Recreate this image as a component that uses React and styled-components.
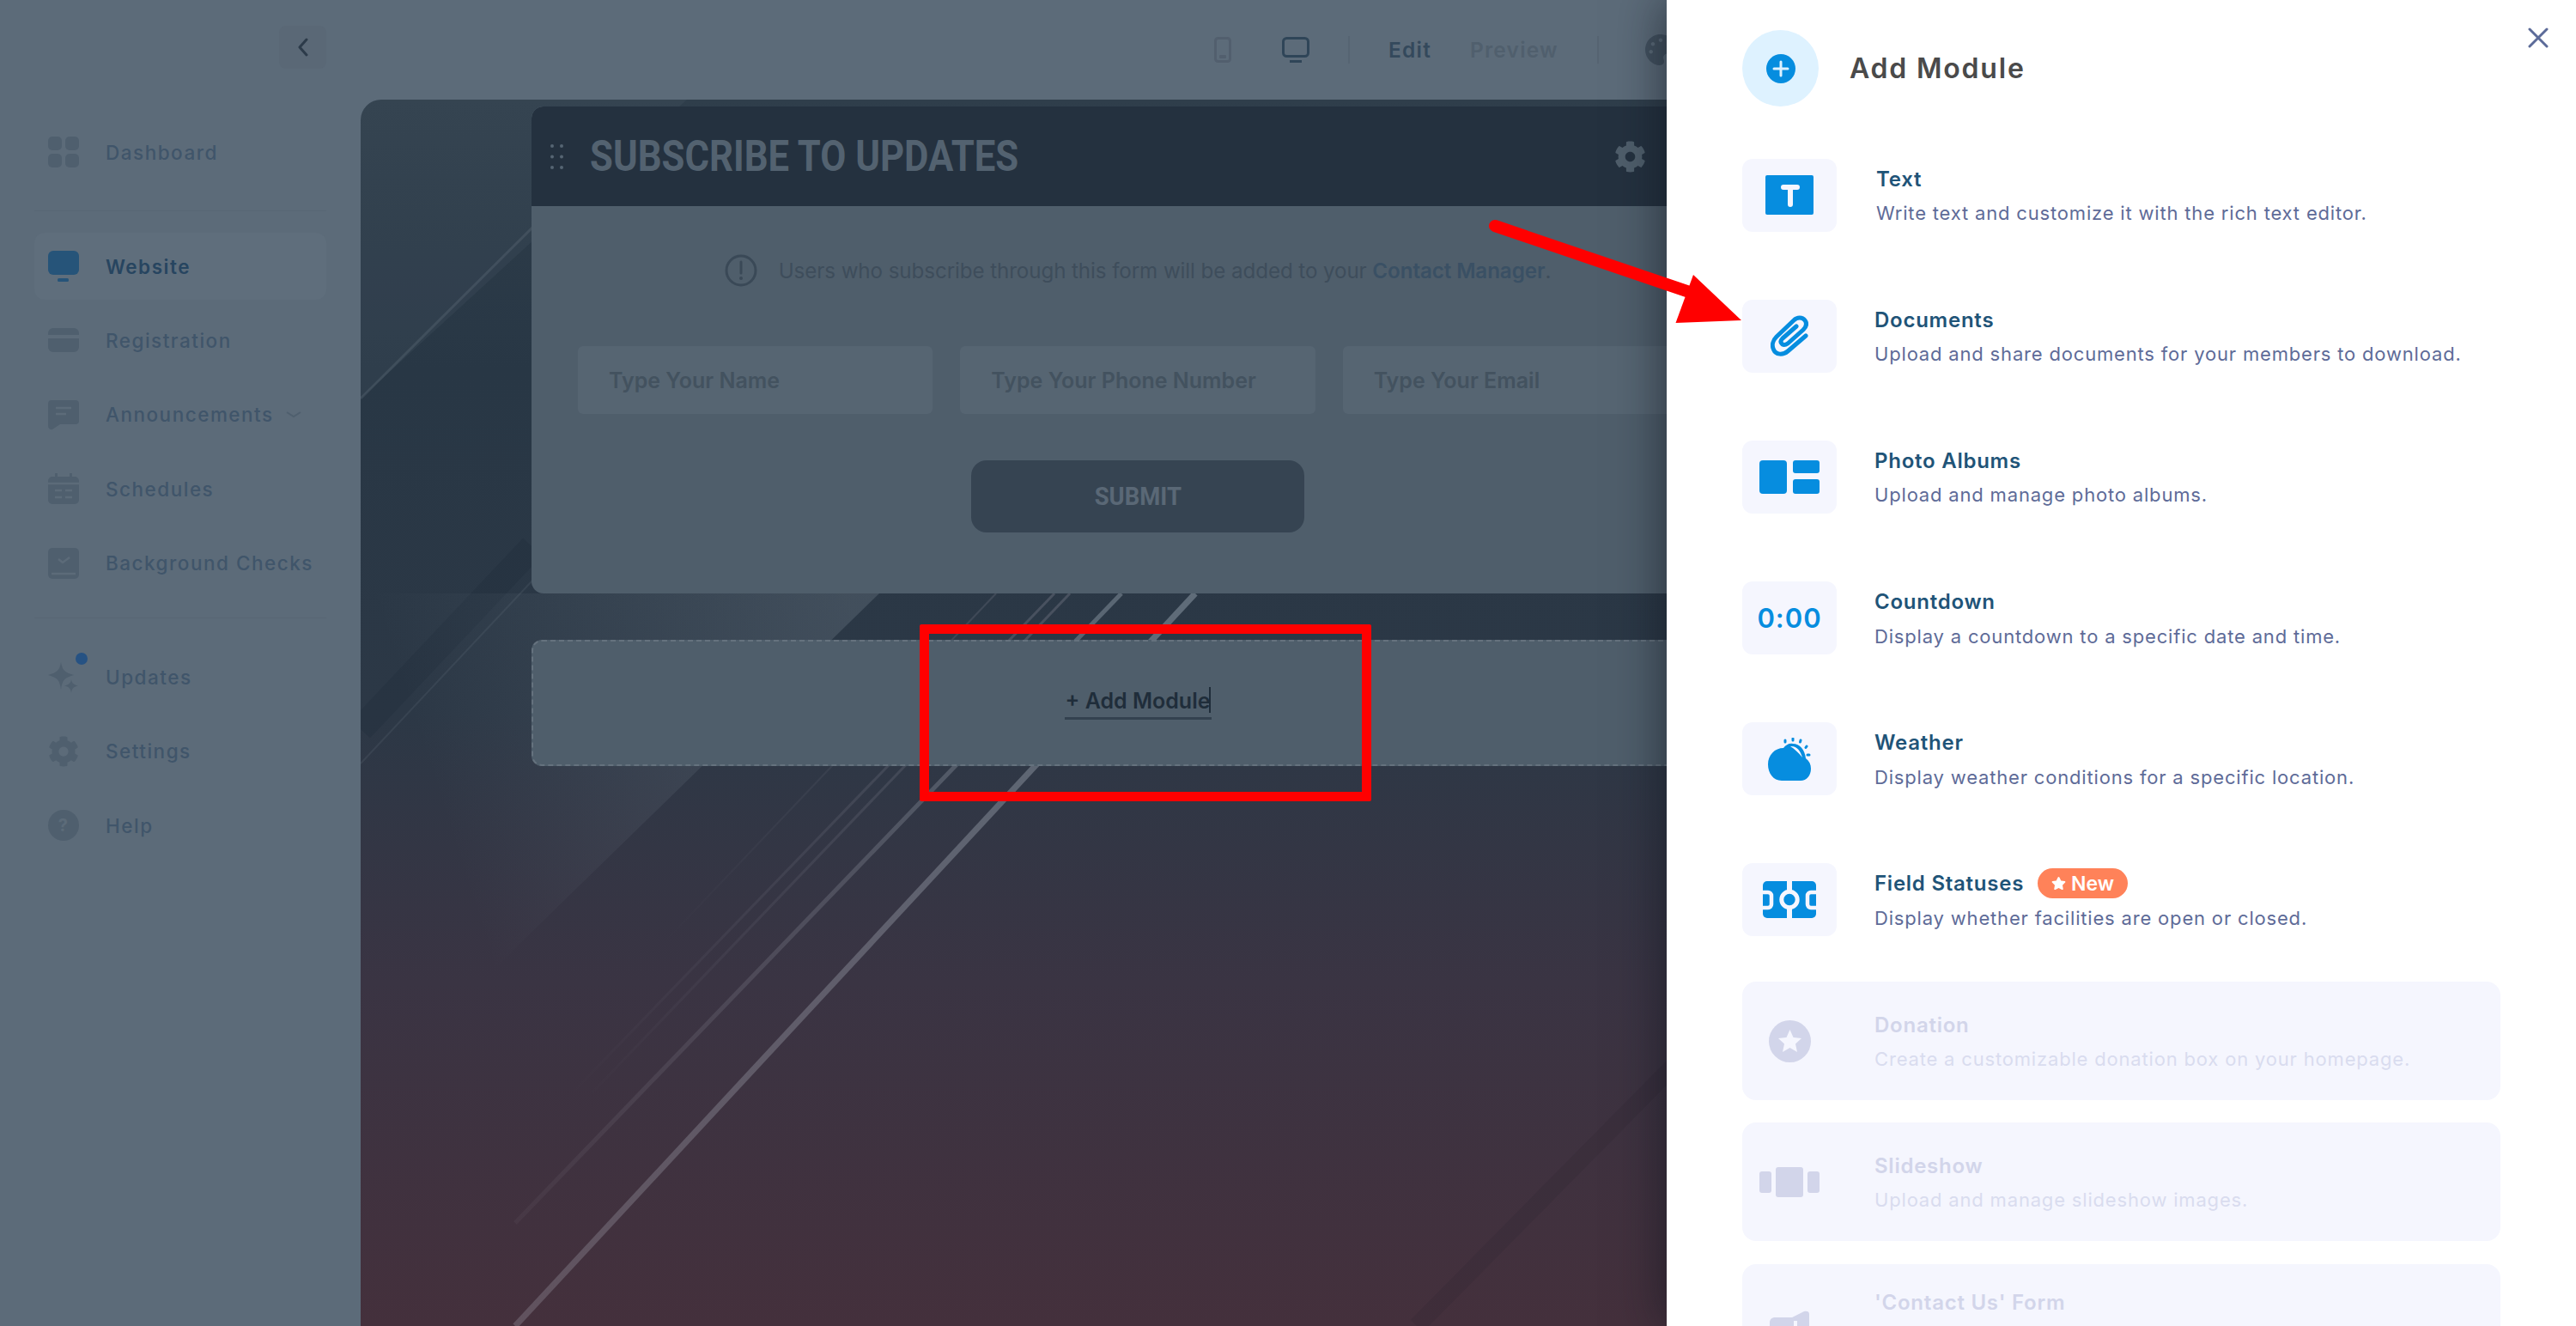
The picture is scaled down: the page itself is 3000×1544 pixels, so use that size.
import React from 'react';
import styled, { createGlobalStyle } from 'styled-components';
import { FaCog, FaStar, FaPalette } from 'react-icons/fa';

const Global = createGlobalStyle`
  html, body { margin: 0; padding: 0; background: #5c6b79; }
  body { font-family: Inter, "Liberation Sans", sans-serif; }
  * { box-sizing: border-box; }
`;

const Page = styled.div`
  position: relative;
  width: 3000px;
  height: 1544px;
  overflow: hidden;
  display: flex;
  background: #5c6b79;
`;

/* ---------- sidebar ---------- */
const Sidebar = styled.aside`
  width: 420px;
  flex: none;
  padding: 30px 40px 0;
  display: flex;
  flex-direction: column;
`;
const CollapseButton = styled.div`
  align-self: flex-end;
  width: 55px;
  height: 50px;
  margin-bottom: 58px;
  border-radius: 8px;
  background: #5a6876;
  display: flex;
  align-items: center;
  justify-content: center;
`;
const NavGroup = styled.nav`
  display: flex;
  flex-direction: column;
  gap: 8.4px;
`;
const NavItem = styled.div`
  position: relative;
  height: 78px;
  padding-left: 16px;
  display: flex;
  align-items: center;
  gap: 31px;
  border-radius: 12px;
  background: ${p => (p.$active ? '#5f6e7c' : 'transparent')};
  color: ${p => (p.$active ? '#274560' : '#40556a')};
  font-size: 22.5px;
  font-weight: ${p => (p.$active ? 600 : 500)};
  letter-spacing: 1.5px;
`;
const NavDivider = styled.div`
  height: 1px;
  background: #586674;
  margin: ${p => p.$m};
`;
const NotifyDot = styled.span`
  position: absolute;
  left: 48px;
  top: 10px;
  width: 14px;
  height: 14px;
  border-radius: 50%;
  background: #265283;
`;
const NavIcon = styled.svg`
  width: 36px;
  height: 36px;
  flex: none;
  fill: ${p => p.$c || '#4f5f6e'};
`;
const NavChevron = styled.svg`
  display: block;
  flex: none;
  width: 18px;
  height: 8px;
  margin-left: -17px;
`;

/* ---------- main ---------- */
const Main = styled.main`
  flex: 1;
  display: flex;
  flex-direction: column;
  min-width: 0;
`;
const TopBar = styled.header`
  height: 116px;
  flex: none;
  padding: 0 0 0 994px;
  display: flex;
  align-items: center;
  gap: 45px;
`;
const DeviceIcons = styled.div`
  display: flex;
  align-items: center;
  gap: 59px;
`;
const BarDivider = styled.span`
  width: 2px;
  height: 32px;
  background: #566472;
`;
const BarLabel = styled.span`
  font-size: 24.5px;
  font-weight: 600;
  letter-spacing: 1.2px;
  color: ${p => (p.$on ? '#34495c' : '#505f6d')};
`;
const PaletteIcon = styled(FaPalette)`
  width: 36px;
  height: 36px;
  margin-left: 9px;
  color: #435260;
`;
const Canvas = styled.section`
  position: relative;
  flex: 1;
  padding: 8px 0 0 199px;
  border-top-left-radius: 24px;
  overflow: hidden;
  background: linear-gradient(180deg, #2f3e4b 0%, #283745 22%, #2c3846 50%, #3a3443 72%, #44303c 100%);
`;
const Streaks = styled.svg`
  position: absolute;
  left: 0;
  top: 0;
  width: 1580px;
  height: 1428px;
`;
const Card = styled.div`
  position: relative;
  width: 1412px;
  height: 567px;
  border-radius: 14px;
  overflow: hidden;
  background: #4f5e6b;
`;
const CardHeader = styled.div`
  height: 116px;
  padding: 0 114px 0 22px;
  display: flex;
  align-items: center;
  background: #24313f;
  border-radius: 14px 14px 0 0;
  color: #536270;
`;
const DragDots = styled.svg`
  width: 15px;
  height: 29px;
  margin-right: 31px;
  fill: #566573;
`;
const CardTitle = styled.h2`
  margin: 0;
  flex: 1;
  font: 700 50px/1 Roboto, sans-serif;
  color: #536270;
  white-space: nowrap;
  transform: scaleX(0.873);
  transform-origin: left center;
`;
const CardGear = styled(FaCog)`
  width: 37px;
  height: 37px;
  color: #4f5e6b;
`;
const Notice = styled.div`
  margin: 56px 0 69px;
  display: flex;
  align-items: center;
  justify-content: center;
  gap: 25px;
  height: 38px;
  font-size: 24.2px;
  color: #3e4d5b;
  letter-spacing: -0.1px;
`;
const NoticeLink = styled.span`
  color: #3a5064;
  font-weight: 600;
`;
const Fields = styled.div`
  display: grid;
  grid-template-columns: repeat(3, 1fr);
  gap: 32px;
  padding: 0 54px;
`;
const Field = styled.div`
  height: 79px;
  padding-left: 36px;
  display: flex;
  align-items: center;
  border-radius: 6px;
  background: #566572;
  color: #43525f;
  font-size: 25px;
  font-weight: 600;
`;
const Submit = styled.div`
  width: 388px;
  height: 84px;
  margin: 54px auto 0;
  border-radius: 18px;
  background: #364452;
  display: flex;
  align-items: center;
  justify-content: center;
`;
const SubmitLabel = styled.span`
  font: 700 30px/1 Roboto, sans-serif;
  color: #5a6876;
  transform: scaleX(0.915);
`;
const AddBox = styled.div`
  position: relative;
  width: 1412px;
  height: 147px;
  margin-top: 54px;
  border: 2px dashed #65727e;
  border-radius: 12px;
  background: #4f5e6b;
  display: flex;
  justify-content: center;
  padding-top: 53px;
`;
const AddLink = styled.div`
  position: relative;
  width: 171px;
  height: 38px;
  border-bottom: 3px solid #33414f;
  color: #1f2d3a;
  font-size: 25px;
  font-weight: 600;
  line-height: 32px;
  white-space: nowrap;
  text-align: center;
`;
const Caret = styled.span`
  position: absolute;
  right: 1px;
  top: 0;
  width: 2px;
  height: 30px;
  background: #1f2d3a;
`;

/* ---------- annotations ---------- */
const RedBox = styled.div`
  position: absolute;
  left: 1071px;
  top: 727px;
  width: 526px;
  height: 206px;
  border: 11px solid #ff0000;
  border-radius: 2px;
  z-index: 3;
`;
const RedArrow = styled.svg`
  position: absolute;
  left: 1730px;
  top: 250px;
  width: 310px;
  height: 140px;
  z-index: 5;
`;

/* ---------- panel ---------- */
const Panel = styled.aside`
  position: absolute;
  left: 1941px;
  top: 0;
  width: 1059px;
  height: 1544px;
  padding: 35px 0 0 88px;
  overflow: hidden;
  background: #fff;
  box-shadow: -6px 0 50px rgba(15, 20, 30, 0.55);
  z-index: 4;
`;
const CloseIcon = styled.svg`
  position: absolute;
  left: 1003px;
  top: 32px;
  width: 24px;
  height: 24px;
  stroke: #5c6b99;
  stroke-width: 3;
  stroke-linecap: round;
`;
const PanelHeader = styled.div`
  height: 89px;
  margin-bottom: 34px;
  display: flex;
  align-items: center;
  gap: 36px;
`;
const PlusCircle = styled.div`
  width: 89px;
  height: 89px;
  border-radius: 50%;
  background: #def2ff;
  display: flex;
  align-items: center;
  justify-content: center;
`;
const PanelTitle = styled.h1`
  margin: 0;
  font-size: 32px;
  font-weight: 600;
  letter-spacing: 1.8px;
  color: #4a4a4a;
`;
const ModuleList = styled.div`
  display: flex;
  flex-direction: column;
  gap: 26.2px;
  width: 883px;
`;
const ModuleRow = styled.div`
  height: 138px;
  flex: none;
  display: flex;
  align-items: center;
  gap: ${p => p.$gap || 44}px;
  border-radius: 16px;
  background: ${p => (p.$disabled ? '#f5f6fe' : 'transparent')};
`;
const IconBox = styled.div`
  width: 110px;
  height: 85px;
  flex: none;
  border-radius: 12px;
  background: ${p => (p.$disabled ? 'transparent' : '#f5f6fe')};
  display: flex;
  align-items: center;
  justify-content: center;
`;
const TimerGlyph = styled.span`
  font-size: 31px;
  font-weight: 600;
  letter-spacing: 1px;
  color: #068ddf;
`;
const TextBlock = styled.div`
  height: 80px;
  margin-top: ${p => p.$lift || 0}px;
  display: flex;
  flex-direction: column;
`;
const ModuleTitle = styled.div`
  height: 42px;
  display: flex;
  align-items: center;
  gap: 16px;
  font-size: 24px;
  font-weight: 600;
  letter-spacing: 0.75px;
  color: ${p => (p.$disabled ? '#d2d5ea' : '#1f5478')};
`;
const ModuleDesc = styled.div`
  height: 38px;
  display: flex;
  align-items: center;
  font-size: 22px;
  letter-spacing: 0.82px;
  color: ${p => (p.$disabled ? '#d9dcef' : '#5e6b98')};
`;
const NewBadge = styled.span`
  height: 35px;
  width: 105px;
  border-radius: 18px;
  background: #ff8259;
  color: #fff;
  font-size: 23px;
  font-weight: 600;
  letter-spacing: 0;
  display: flex;
  align-items: center;
  justify-content: center;
  gap: 6px;
`;

const BLUE = '#068ddf';
const MUTED = '#d2d5ea';

const Svg = styled.svg`
  display: block;
  flex: none;
`;

const modules = [
  {
    title: 'Text', gap: 46, desc: 'Write text and customize it with the rich text editor.',
    icon: (
      <Svg width="56" height="46" viewBox="0 0 56 46">
        <rect width="56" height="46" rx="2" fill={BLUE} />
        <path d="M21 14h16M29 14v20" stroke="#f5f6fe" strokeWidth="6" strokeLinecap="round" fill="none" />
      </Svg>
    ),
  },
  {
    title: 'Documents', desc: 'Upload and share documents for your members to download.',
    icon: (
      <Svg width="44" height="48" viewBox="0 0 44 48">
        <path d="M41 24L20 42C14 47 6 46 3.500 40C1 35 3 29 7 25L27 6C31 2 37 2 40 6C43 10 41 14 38 17L20 33C17 35 14 35 13 33C11 31 12 29 14 27L30 13"
          fill="none" stroke={BLUE} strokeWidth="5" strokeLinecap="round" strokeLinejoin="round" />
      </Svg>
    ),
  },
  {
    title: 'Photo Albums', desc: 'Upload and manage photo albums.',
    icon: (
      <Svg width="70" height="39" viewBox="0 0 70 39" fill={BLUE}>
        <rect width="32" height="39" rx="4" />
        <rect x="39" width="31" height="15" rx="3" />
        <rect x="39" y="22" width="31" height="17" rx="3" />
      </Svg>
    ),
  },
  {
    title: 'Countdown', desc: 'Display a countdown to a specific date and time.',
    icon: <TimerGlyph>0:00</TimerGlyph>,
  },
  {
    title: 'Weather', desc: 'Display weather conditions for a specific location.',
    icon: (
      <Svg width="50" height="50" viewBox="0 0 50 50">
        <path d="M16 50C6 50 0 41 0 31C0 20 8 12 18 12C21 8 25 6 29 7C37 7 43 14 44 24C48 27 50 31 50 36C50 44 45 50 38 50Z" fill={BLUE} />
        <path d="M26 10C33 9 38 15 40 23C35 17 31 13 26 10Z" fill="#f5f6fe" />
        <path d="M20 3v2M29 1v2M38 3l-.5 2M45 10l-1 1.500M46 20h2" stroke={BLUE} strokeWidth="3" strokeLinecap="round" />
      </Svg>
    ),
  },
  {
    title: 'Field Statuses', badge: true, desc: 'Display whether facilities are open or closed.',
    icon: (
      <Svg width="62" height="43" viewBox="0 0 62 43">
        <rect width="62" height="43" rx="5" fill={BLUE} />
        <path d="M31 0v43" stroke="#f5f6fe" strokeWidth="6" />
        <circle cx="31" cy="21.500" r="9.200" fill={BLUE} stroke="#f5f6fe" strokeWidth="5" />
        <path d="M0 13h6a4 4 0 0 1 4 4v10a4 4 0 0 1-4 4H0M62 13h-6a4 4 0 0 0-4 4v10a4 4 0 0 0 4 4h6" fill="none" stroke="#f5f6fe" strokeWidth="4.500" />
      </Svg>
    ),
  },
  {
    title: 'Donation', disabled: true, desc: 'Create a customizable donation box on your homepage.',
    icon: (
      <Svg width="49" height="49" viewBox="0 0 49 49">
        <circle cx="24.500" cy="24.500" r="24.500" fill={MUTED} />
        <path d="M24.500 11l4 9 9.500 1-7 6.500 2 9.500-8.500-5-8.500 5 2-9.500-7-6.500 9.500-1z" fill="#f5f6fe" />
      </Svg>
    ),
  },
  {
    title: 'Slideshow', disabled: true, desc: 'Upload and manage slideshow images.',
    icon: (
      <Svg width="70" height="35" viewBox="0 0 70 35" fill={MUTED}>
        <rect y="5" width="14" height="25" rx="3" />
        <rect x="19" width="32" height="35" rx="3" />
        <rect x="56" y="5" width="14" height="25" rx="3" />
      </Svg>
    ),
  },
  {
    title: "'Contact Us' Form", disabled: true, desc: '', lift: -10,
    icon: (
      <Svg width="46" height="62" viewBox="0 -16 46 62" fill={MUTED}>
        <path d="M0 14C0 10 3 8 6 8H26L38 2C41 0 46 0 46 4V46H0Z" />
        <rect x="28" y="12" width="4" height="30" fill="#f5f6fe" />
      </Svg>
    ),
  },
];

const navTop = [
  { label: 'Website', active: true, icon: (
    <NavIcon viewBox="0 0 36 36" $c="#265479">
      <rect y="0" width="36" height="28" rx="6" />
      <rect x="11" y="32" width="13" height="4" rx="1.500" />
    </NavIcon>
  ) },
  { label: 'Registration', icon: (
    <NavIcon viewBox="0 0 36 36">
      <path d="M0 10a6 6 0 0 1 6-6h24a6 6 0 0 1 6 6v2H0zM0 16h36v10a6 6 0 0 1-6 6H6a6 6 0 0 1-6-6z" />
    </NavIcon>
  ) },
  { label: 'Announcements', chevron: true, icon: (
    <NavIcon viewBox="0 0 36 36">
      <path d="M4 1h28a4 4 0 0 1 4 4v20a4 4 0 0 1-4 4H14l-9 6a4 4 0 0 1-5-4V5a4 4 0 0 1 4-4z" />
      <path d="M9 10h18M9 17h12" stroke="#5c6b79" strokeWidth="2.500" />
    </NavIcon>
  ) },
  { label: 'Schedules', icon: (
    <NavIcon viewBox="0 0 36 36">
      <path d="M8 0h3v4h14V0h3v4h3a5 5 0 0 1 5 5v22a5 5 0 0 1-5 5H5a5 5 0 0 1-5-5V9a5 5 0 0 1 5-5h3z" />
      <path d="M0 12h36M8 20h8M20 20h8M8 28h8M20 28h8" stroke="#5c6b79" strokeWidth="2.500" />
    </NavIcon>
  ) },
  { label: 'Background Checks', icon: (
    <NavIcon viewBox="0 0 36 36">
      <rect y="0" width="36" height="36" rx="5" />
      <path d="M12 13l5 4 8-6M4 30h28" stroke="#5c6b79" strokeWidth="2.500" fill="none" />
    </NavIcon>
  ) },
];

const navBottom = [
  { label: 'Updates', dot: true, icon: (
    <NavIcon viewBox="0 0 36 36">
      <path d="M15 0c1.500 9 4 12 15 15-11 3-13.500 6-15 17-1.500-11-4-14-15-17C11 12 13.500 9 15 0z" />
      <path d="M27 20c.7 4 2 6 8 7.500-6 1.500-7.300 3.500-8 8.500-.7-5-2-7-8-8.500 6-1.500 7.300-3.500 8-7.500z" />
    </NavIcon>
  ) },
  { label: 'Settings', icon: <NavIcon as={FaCog} $c="#4f5f6e" /> },
  { label: 'Help', icon: (
    <NavIcon viewBox="0 0 36 36">
      <circle cx="18" cy="18" r="18" />
      <text x="18" y="25" textAnchor="middle" fontSize="20" fontWeight="700" fill="#5c6b79" fontFamily="Inter">?</text>
    </NavIcon>
  ) },
];

function NavEntry({ item }) {
  return (
    <NavItem $active={item.active}>
      {item.icon}
      {item.dot && <NotifyDot />}
      <span>{item.label}</span>
      {item.chevron && (
        <NavChevron viewBox="0 0 18 8">
          <path d="M1 1l8 5 8-5" fill="none" stroke="#4f5f6e" strokeWidth="2" />
        </NavChevron>
      )}
    </NavItem>
  );
}

export default function App() {
  return (
    <Page>
      <Global />
      <Sidebar>
        <CollapseButton>
          <Svg width="12" height="22" viewBox="0 0 12 22">
            <path d="M10 2L2 11l8 9" fill="none" stroke="#2c3b4a" strokeWidth="3" strokeLinecap="round" strokeLinejoin="round" />
          </Svg>
        </CollapseButton>
        <NavGroup>
          <NavEntry item={{ label: 'Dashboard', icon: (
            <NavIcon viewBox="0 0 36 36">
              <rect width="16" height="16" rx="5" />
              <rect x="20" width="16" height="16" rx="5" />
              <rect y="20" width="16" height="16" rx="5" />
              <rect x="20" y="20" width="16" height="16" rx="5" />
            </NavIcon>
          ) }} />
        </NavGroup>
        <NavDivider $m="29px 0 25px" />
        <NavGroup>
          {navTop.map(i => <NavEntry key={i.label} item={i} />)}
        </NavGroup>
        <NavDivider $m="24px 0 30px" />
        <NavGroup>
          {navBottom.map(i => <NavEntry key={i.label} item={i} />)}
        </NavGroup>
      </Sidebar>

      <Main>
        <TopBar>
          <DeviceIcons>
            <Svg width="20" height="30" viewBox="0 0 20 30">
              <rect x="1.500" y="1.500" width="17" height="27" rx="3" fill="none" stroke="#525f6e" strokeWidth="3" />
              <rect x="6" y="21" width="8" height="4" rx="1" fill="#525f6e" />
            </Svg>
            <Svg width="32" height="30" viewBox="0 0 32 30">
              <rect x="1.500" y="1.500" width="29" height="21" rx="4" fill="none" stroke="#2f4558" strokeWidth="3" />
              <rect x="9" y="27" width="14" height="3" fill="#2f4558" />
            </Svg>
          </DeviceIcons>
          <BarDivider />
          <BarLabel $on>Edit</BarLabel>
          <BarLabel>Preview</BarLabel>
          <BarDivider />
          <PaletteIcon />
        </TopBar>

        <Canvas>
          <Streaks viewBox="420 116 1580 1428" preserveAspectRatio="none">
            <defs>
              <linearGradient id="wedge" gradientUnits="userSpaceOnUse" x1="1000" y1="740" x2="500" y2="900">
                <stop offset="0" stopColor="#8a97a3" stopOpacity="0.24" />
                <stop offset="1" stopColor="#8a97a3" stopOpacity="0" />
              </linearGradient>
              <linearGradient id="bright" gradientUnits="userSpaceOnUse" x1="1392" y1="691" x2="600" y2="1544">
                <stop offset="0" stopColor="#8a97a3" stopOpacity="0.55" />
                <stop offset="1" stopColor="#8b8490" stopOpacity="0.4" />
              </linearGradient>
              <linearGradient id="second" gradientUnits="userSpaceOnUse" x1="1306" y1="691" x2="600" y2="1424">
                <stop offset="0" stopColor="#8a97a3" stopOpacity="0.5" />
                <stop offset="1" stopColor="#8b8490" stopOpacity="0.08" />
              </linearGradient>
              <linearGradient id="faint" gradientUnits="userSpaceOnUse" x1="1240" y1="691" x2="680" y2="1290">
                <stop offset="0" stopColor="#8a8a98" stopOpacity="0.32" />
                <stop offset="1" stopColor="#8a8a98" stopOpacity="0" />
              </linearGradient>
              <linearGradient id="fainter" gradientUnits="userSpaceOnUse" x1="1160" y1="691" x2="772" y2="1099">
                <stop offset="0" stopColor="#8a8a98" stopOpacity="0.22" />
                <stop offset="1" stopColor="#8a8a98" stopOpacity="0" />
              </linearGradient>
            </defs>
            <path d="M420 116H800L420 464Z" fill="#8a97a3" opacity="0.07" />
            <path d="M620 265L420 464" stroke="#8a97a3" strokeWidth="3" opacity="0.18" />
            <path d="M420 849L620 637" stroke="#1d2a38" strokeWidth="30" opacity="0.25" />
            <path d="M420 889L620 676" stroke="#8a97a3" strokeWidth="2" opacity="0.12" />
            <path d="M1024 691L600 1104L420 1290V691Z" fill="url(#wedge)" />
            <path d="M1392 691L600 1544" stroke="url(#bright)" strokeWidth="7" />
            <path d="M1306 691L600 1424" stroke="url(#second)" strokeWidth="5" />
            <path d="M1246 691L690 1272" stroke="url(#faint)" strokeWidth="3" />
            <path d="M1228 691L640 1300" stroke="url(#faint)" strokeWidth="3" />
            <path d="M1160 691L772 1099" stroke="url(#fainter)" strokeWidth="2" />
            <path d="M1959 1231L1650 1544" stroke="#2c2430" strokeWidth="20" opacity="0.2" />
          </Streaks>
          <Card>
            <CardHeader>
              <DragDots viewBox="0 0 15 29">
                <circle cx="2" cy="2" r="2" /><circle cx="13" cy="2" r="2" />
                <circle cx="2" cy="14.500" r="2" /><circle cx="13" cy="14.500" r="2" />
                <circle cx="2" cy="27" r="2" /><circle cx="13" cy="27" r="2" />
              </DragDots>
              <CardTitle>SUBSCRIBE TO UPDATES</CardTitle>
              <CardGear />
            </CardHeader>
            <Notice>
              <Svg width="38" height="38" viewBox="0 0 38 38">
                <circle cx="19" cy="19" r="17" fill="none" stroke="#3a4957" strokeWidth="3" />
                <path d="M19 9v13" stroke="#3a4957" strokeWidth="3" strokeLinecap="round" />
                <circle cx="19" cy="28" r="2" fill="#3a4957" />
              </Svg>
              <span>Users who subscribe through this form will be added to your <NoticeLink>Contact Manager</NoticeLink>.</span>
            </Notice>
            <Fields>
              <Field>Type Your Name</Field>
              <Field>Type Your Phone Number</Field>
              <Field>Type Your Email</Field>
            </Fields>
            <Submit><SubmitLabel>SUBMIT</SubmitLabel></Submit>
          </Card>
          <AddBox>
            <AddLink>+ Add Module<Caret /></AddLink>
          </AddBox>
        </Canvas>
      </Main>

      <RedBox />
      <RedArrow viewBox="1730 250 310 140">
        <path d="M1741 263L1985 346" stroke="#ff0000" strokeWidth="14" strokeLinecap="round" />
        <path d="M2028 373L1972 320L1951.500 376Z" fill="#ff0000" />
      </RedArrow>

      <Panel>
        <CloseIcon viewBox="0 0 24 24">
          <path d="M2 2l20 20M22 2L2 22" />
        </CloseIcon>
        <PanelHeader>
          <PlusCircle>
            <Svg width="34" height="34" viewBox="0 0 34 34">
              <circle cx="17" cy="17" r="17" fill={BLUE} />
              <path d="M17 9v16M9 17h16" stroke="#def2ff" strokeWidth="3" strokeLinecap="round" />
            </Svg>
          </PlusCircle>
          <PanelTitle>Add Module</PanelTitle>
        </PanelHeader>
        <ModuleList>
          {modules.map(m => (
            <ModuleRow key={m.title} $disabled={m.disabled} $gap={m.gap}>
              <IconBox $disabled={m.disabled}>{m.icon}</IconBox>
              <TextBlock $lift={m.lift}>
                <ModuleTitle $disabled={m.disabled}>
                  {m.title}
                  {m.badge && <NewBadge><FaStar size={17} />New</NewBadge>}
                </ModuleTitle>
                {m.desc && <ModuleDesc $disabled={m.disabled}>{m.desc}</ModuleDesc>}
              </TextBlock>
            </ModuleRow>
          ))}
        </ModuleList>
      </Panel>
    </Page>
  );
}
